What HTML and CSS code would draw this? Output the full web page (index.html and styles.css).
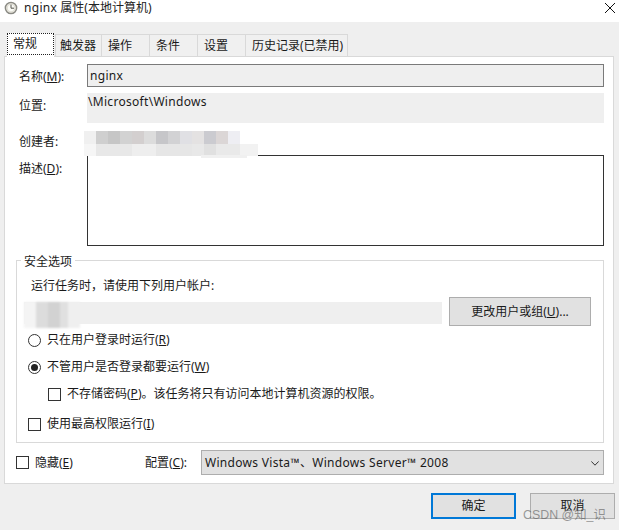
FILE: index.html
```html
<!DOCTYPE html>
<html lang="zh">
<head>
<meta charset="utf-8">
<title>nginx 属性(本地计算机)</title>
<link rel="stylesheet" href="styles.css">
</head>
<body>
<div class="window">
  <header class="titlebar">
    <svg class="clock" width="14" height="14" viewBox="0 0 14 14"><circle cx="7" cy="7" r="5.6" fill="#f4f1e6" stroke="#8a8a84" stroke-width="1.5"/><circle cx="7" cy="7" r="3.9" fill="#fbfbf6" stroke="#c9c8bd" stroke-width=".6"/><path d="M7 3.6V7.2H10" fill="none" stroke="#55554f" stroke-width="1"/></svg>
    <span class="title"><span class="latin">nginx</span> 属性(本地计算机)</span>
    <svg class="close" width="10" height="10" viewBox="0 0 10 10"><path d="M0 0L10 10M10 0L0 10" stroke="#111" stroke-width="1" fill="none"/></svg>
  </header>
  <main class="body">
    <nav class="tabs">
      <div class="tab tab-active"><span class="focus">常规</span></div>
      <div class="tab tab-second">触发器</div>
      <div class="tab">操作</div>
      <div class="tab">条件</div>
      <div class="tab">设置</div>
      <div class="tab tab-wide">历史记录(已禁用)</div>
    </nav>
    <section class="panel">
      <div class="form">
        <label class="lbl lbl-name">名称(<u>M</u>):</label>
        <div class="input latin">nginx</div>
        <label class="lbl lbl-loc">位置:</label>
        <div class="readonly latin">\Microsoft\Windows</div>
        <label class="lbl lbl-author">创建者:</label>
        <div class="author"></div>
        <label class="lbl lbl-desc">描述(<u>D</u>):</label>
        <div class="textarea"></div>
      </div>
      <div class="smudge smudge-a"></div>
      <div class="smudge smudge-b"></div>
      <fieldset class="group">
        <legend class="legend">安全选项</legend>
        <div class="run-as">运行任务时，请使用下列用户帐户:</div>
        <div class="user-row">
          <div class="user-field"><div class="smudge-user"></div></div>
          <button class="btn btn-change">更改用户或组(<u>U</u>)...</button>
        </div>
        <div class="opt opt-1"><span class="radio"></span>只在用户登录时运行(<u>R</u>)</div>
        <div class="opt opt-2"><span class="radio radio-on"></span>不管用户是否登录都要运行(<u>W</u>)</div>
        <div class="opt opt-3"><span class="check"></span>不存储密码(<u>P</u>)。该任务将只有访问本地计算机资源的权限。</div>
        <div class="opt opt-4"><span class="check"></span>使用最高权限运行(<u>I</u>)</div>
      </fieldset>
      <div class="bottom">
        <span class="check"></span><span class="hidden-label">隐藏(<u>E</u>)</span>
        <span class="cfg-label">配置(<u>C</u>):</span>
        <div class="select latin">Windows Vista™、Windows Server™ 2008
          <svg class="chev" width="8" height="5" viewBox="0 0 8 5"><path d="M.3 .4L4 4.2L7.7 .4" fill="none" stroke="#333" stroke-width="1"/></svg>
        </div>
      </div>
    </section>
    <footer class="footer">
      <button class="btn btn-ok">确定</button>
      <button class="btn btn-cancel">取消</button>
    </footer>
    <div class="watermark">CSDN @知_识</div>
  </main>
</div>
</body>
</html>
```
FILE: styles.css
```css
* { box-sizing: border-box; }
html, body { margin: 0; padding: 0; }
body {
  width: 619px; height: 530px; overflow: hidden; background: #fff; color: #1a1a1a;
  font: 12px/16px "Noto Sans", "Noto Sans CJK SC", sans-serif;
}
u { text-underline-offset: 1px; }
.latin { letter-spacing: .3px; }
.window { width: 619px; height: 530px; display: flex; flex-direction: column; }
.titlebar { height: 22px; flex: none; display: flex; align-items: center; padding: 0 4px 6px 4px; background: #fff; }
.clock { flex: none; }
.title { margin-left: 6px; flex: 1; font-size: 12px; color: #222; }
.close { flex: none; }
.body { flex: 1; background: #efefef; position: relative; padding: 11px 5px 0 4px; }
.tabs { display: flex; height: 23px; padding-left: 3px; align-items: flex-end; position: relative; z-index: 1; }
.tab {
  width: 49px; height: 22px; padding-left: 6px; background: #f0f0f0;
  border: 1px solid #d9d9d9; border-bottom: 0; line-height: 22px; color: #1a1a1a; margin-left: -1px;
}
.tab-second { width: 47px; margin-left: 1px; padding-left: 4px; }
.tab-wide { width: 103px; }
.tab-active { width: 47px; height: 24px; margin: 0 0 -1px; background: #fff; padding: 0; border-color: #fff; border-left: 0; border-right: 0; position: relative; }
.focus { display: block; height: 22px; border: 1px dotted #222; line-height: 20px; padding-left: 5px; margin: -1px 0 0; }
.panel { width: 610px; height: 428px; background: #fff; border: 1px solid #d9d9d9; padding: 7px 9px 0 11px; position: relative; }
.form { display: grid; grid-template-columns: 71px 517px; grid-template-rows: 23px 36px 32px 91px; }
.lbl { padding-left: 3px; }
.lbl-name { line-height: 25px; }
.lbl-loc { margin-top: 4px; line-height: 30px; height: 30px; }
.lbl-author { line-height: 38px; }
.lbl-desc { line-height: 28px; }
.input { height: 23px; border: 1px solid #7a7a7a; background: #efefef; line-height: 21px; padding-left: 2px; }
.readonly { height: 30px; margin-top: 6px; background: #efefef; line-height: 17px; padding-left: 1px; }
.author { height: 26px; }
.textarea { height: 91px; border: 1px solid #333; background: #fff; }
.smudge { position: absolute; pointer-events: none; filter: blur(.6px); }
.smudge-a {
  left: 79px; top: 74px; width: 168px; height: 13px;
  background: linear-gradient(90deg, #f0f0f0 0 12px, #cfcfcf 12px 24px, #c6c6c6 24px 36px, #d2d2d2 36px 48px, #d3cfcf 48px 60px, #dcdcdc 60px 72px, #c6c6c9 72px 84px, #d2d2d4 84px 96px, #e0e0e4 96px 108px, #e4e2e2 108px 120px, #cbcbd0 120px 132px, #dbd6d6 132px 144px, #eeeef3 144px 156px, #fff 156px);
}
.smudge-b {
  left: 79px; top: 87px; width: 174px; height: 12px;
  background: linear-gradient(90deg, #f6f6f6 0 12px, #e8e8e8 12px 48px, #eeeeee 48px 72px, #e6e6e6 72px 108px, #e8e8e8 108px 120px, #e0e0e0 120px 132px, #e9e9e9 132px 156px, #f2f2f2 156px);
}
.smudge-b::after { content: ""; position: absolute; left: 117px; top: 11px; width: 46px; height: 3px; background: #f0f0f0; }
.group { display: block; width: 588px; height: 191px; margin: 6px 0 0 0; padding: 0; border: 1px solid #d9d9d9; min-width: 0; }
.legend { padding: 0 3px; margin-left: 4px; line-height: 20px; height: 16px; }
.run-as { margin: 10px 0 0 14px; }
.user-row { display: flex; margin-top: 3px; align-items: flex-start; }
.user-field { width: 418px; height: 22px; margin: 5px 0 0 7px; background: #efefef; position: relative; }
.smudge-user {
  position: absolute; left: 0; top: 0; width: 56px; height: 26px; filter: blur(.8px);
  background: linear-gradient(90deg, #f4f4f4 0 12px, #dcdcdc 12px 24px, #d2d2d2 24px 36px, #e0e0e0 36px 44px, #efefef 44px);
}
.btn { font: inherit; color: #1a1a1a; background: #e1e1e1; border: 1px solid #adadad; padding: 0; margin: 0; }
.btn-change { width: 142px; height: 29px; margin-left: 7px; }
.opt { display: flex; align-items: center; height: 16px; }
.opt-1 { margin: 6px 0 0 11px; }
.opt-2 { margin: 11px 0 0 11px; }
.opt-3 { margin: 11px 0 0 31px; }
.opt-4 { margin: 14px 0 0 11px; }
.radio { width: 13px; height: 13px; border: 1px solid #333; border-radius: 50%; background: #fff; margin-right: 6px; flex: none; position: relative; }
.radio-on::after { content: ""; position: absolute; left: 2px; top: 2px; width: 7px; height: 7px; border-radius: 50%; background: #222; }
.check { width: 13px; height: 13px; border: 1px solid #333; background: #fff; margin-right: 6px; flex: none; display: inline-block; }
.bottom { display: flex; align-items: center; height: 25px; margin-top: 7px; }
.hidden-label { width: 110px; }
.cfg-label { width: 56px; }
.select { width: 403px; height: 25px; background: #e1e1e1; border: 1px solid #adadad; line-height: 23px; padding-left: 3px; position: relative; }
.chev { position: absolute; right: 4px; top: 10px; }
.footer { display: flex; justify-content: flex-end; height: 26px; margin-top: 9px; gap: 14px; width: 611px; }
.btn-ok, .btn-cancel { width: 85px; height: 26px; }
.btn-ok { border: 2px solid #0078d7; }
.watermark { position: absolute; left: 523px; top: 485px; color: rgba(90,90,90,.6); font: 12.4px/16px "Liberation Sans", "Noto Sans CJK SC", sans-serif; pointer-events: none; }
```
